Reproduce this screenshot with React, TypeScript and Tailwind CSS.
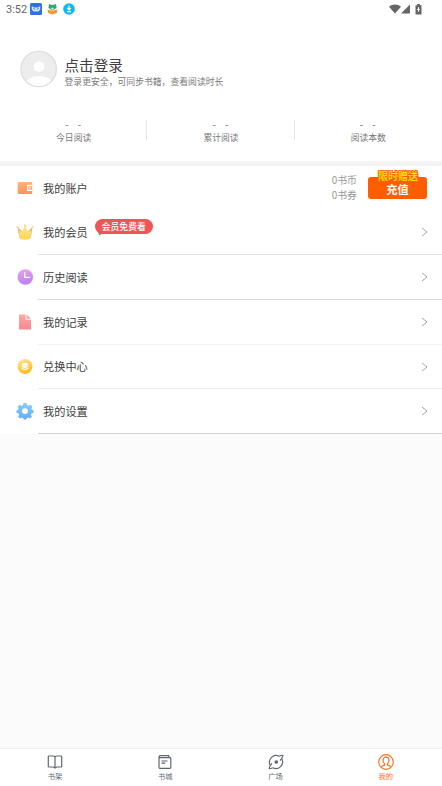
import type { ReactNode } from "react";

interface StatProps {
  label: string;
  divider?: boolean;
}

interface RowProps {
  icon: ReactNode;
  label: string;
  className: string;
  line: string;
  badge?: string;
}

interface TabProps {
  icon: ReactNode;
  label: string;
  active?: boolean;
}

const StatusBar = () => (
  <div className="flex h-[18px] items-center pl-[6px] pr-[20px] text-[#666]">
    <span className="w-[24px] whitespace-nowrap pt-[2px] font-[Roboto] text-[11px] leading-[18px]">
      3:52
    </span>
    <svg className="block" width="12" height="12" viewBox="0 0 12 12">
      <rect width="12" height="12" rx="1.5" fill="#2f6fe8" />
      <path d="M1.800 3l2.200 1.400h4L10.200 3v3.500L8.400 8.500H3.600L1.800 6.500z" fill="#d6e6ff" />
      <path d="M3.400 5.500l1.800.8M8.600 5.500l-1.800.8" stroke="#2f6fe8" strokeWidth="1" />
    </svg>
    <svg className="ml-[5px] block" width="11" height="12" viewBox="0 0 11 12">
      <path d="M2 1l3.500 1L9 1l.6 4-4 2.600L1.400 5z" fill="#36a878" />
      <path d="M.4 6.400l5.100 1.400 5.100-1.400-.8 3.600-4.300 1.400L1.200 10z" fill="#f09a38" />
      <path d="M4 5.500l1.500 1.500L7 5.500 5.500 4.500z" fill="#d9f3dd" />
    </svg>
    <svg className="ml-[5px] block" width="12" height="12" viewBox="0 0 12 12">
      <circle cx="6" cy="6" r="5.800" fill="#0bb8fa" />
      <path d="M6 2.500v4M4.200 5L6 6.800 7.800 5M4 8.700h4" fill="none" stroke="#fff" strokeWidth="1.200" />
    </svg>
    <div className="ml-auto flex items-center">
      <svg className="block" width="12" height="10" viewBox="0 0 12 10">
        <path d="M0 2.800C3.400-.3 8.600-.3 12 2.800L6 9.600z" fill="#666" />
      </svg>
      <svg className="block" width="9" height="10" viewBox="0 0 9 10">
        <path d="M9 .5V9.500H0z" fill="#666" />
      </svg>
      <svg className="ml-[5px] block" width="7" height="11" viewBox="0 0 7 11">
        <path d="M2.200 0h2.600v1.200H6.500v9.300H.5V1.200h1.700z" fill="#666" />
        <path d="M3.500 3.200v4.600M2.200 5.500h2.600" stroke="#fff" strokeWidth="1" />
      </svg>
    </div>
  </div>
);

const Stat = ({ label, divider }: StatProps) => (
  <div className="relative flex-1 text-center text-[#7a7a7a]">
    <div className="h-[10px] whitespace-pre font-['Liberation_Sans'] text-[10px] leading-[9px] tracking-[1.200px] text-[#888]">
      -{"  "}-
    </div>
    <div className="h-[14px] pt-[1px] text-[8.800px] leading-[13px]">{label}</div>
    {divider && <div className="absolute right-0 top-0 h-[20px] w-px bg-[#e4e4e4]" />}
  </div>
);

const Row = ({ icon, label, className, line, badge }: RowProps) => (
  <li className={`flex pl-[16px] ${className}`}>
    <div className="flex w-[22px] items-center pb-[2px]">{icon}</div>
    <div className={`flex flex-1 items-center border-b pl-[5px] pr-[14px] ${line}`}>
      <span className="text-[11.200px]">{label}</span>
      {badge && (
        <div className="relative -top-[6px] ml-[7px] h-[15px] w-[58px] rounded-full bg-[#ef5456] text-center text-[8.800px] font-medium leading-[15px] text-white">
          {badge}
          <svg className="absolute left-[3px] top-[13px]" width="6" height="4" viewBox="0 0 6 4">
            <path d="M0 0h6L1.500 3.500z" fill="#ef5456" />
          </svg>
        </div>
      )}
      <svg className="ml-auto block" width="7" height="10" viewBox="0 0 7 10">
        <path d="M1 1l5 4-5 4" fill="none" stroke="#999" strokeWidth="0.900" />
      </svg>
    </div>
  </li>
);

const Tab = ({ icon, label, active }: TabProps) => (
  <div
    className={`flex flex-1 flex-col items-center pt-[5px] ${
      active ? "text-[#ff701f]" : "text-[#606873]"
    }`}
  >
    {icon}
    <span className="pt-px text-[7.300px] leading-[10px]">{label}</span>
  </div>
);

const WalletIcon = () => (
  <svg width="18" height="18" viewBox="0 0 18 18">
    <defs>
      <linearGradient id="wallet" x1="0" y1="0" x2="0" y2="1">
        <stop stopColor="#ffb66e" />
        <stop offset="1" stopColor="#ff9068" />
      </linearGradient>
    </defs>
    <rect x="1.700" y="3" width="14.500" height="12" rx="1" fill="url(#wallet)" />
    <path d="M16.200 6.500h-4.500v4.800h4.500" fill="none" stroke="#fff" strokeWidth="1.300" />
    <path d="M14 8v1.900" stroke="#fff" strokeWidth="0.900" />
  </svg>
);

const CrownIcon = () => (
  <svg width="18" height="18" viewBox="0 0 18 18">
    <defs>
      <linearGradient id="crown" x1="0" y1="0" x2="0" y2="1">
        <stop stopColor="#fbe59b" />
        <stop offset="1" stopColor="#ffd74e" />
      </linearGradient>
    </defs>
    <path d="M1.500 4L6.500 8.500 4.500 16Q2.500 14 1.500 4zM16.500 4L11.500 8.500l2 7.500Q15.500 14 16.500 4z" fill="#e6be7d" />
    <path d="M9 2.500l2.900 6 3.300-.5-1.200 8Q9 17.500 4 16L2.800 8l3.300.5z" fill="url(#crown)" />
    <circle cx="9" cy="2.800" r="1.500" fill="#f8dfa0" />
    <circle cx="1.500" cy="4" r="1.200" fill="#f1dcb4" />
    <circle cx="16.500" cy="4" r="1.200" fill="#f1dcb4" />
  </svg>
);

const ClockIcon = () => (
  <svg width="18" height="18" viewBox="0 0 18 18">
    <defs>
      <linearGradient id="clock" x1="0.300" y1="0" x2="0.600" y2="1">
        <stop stopColor="#e6a4e8" />
        <stop offset="1" stopColor="#bd7df4" />
      </linearGradient>
    </defs>
    <circle cx="9.300" cy="9" r="7.800" fill="url(#clock)" />
    <path d="M8.700 4.200v5.100h5.500" fill="none" stroke="#fff" strokeWidth="1.300" />
  </svg>
);

const FileIcon = () => (
  <svg width="18" height="18" viewBox="0 0 18 18">
    <defs>
      <linearGradient id="file" x1="0" y1="0" x2="0" y2="1">
        <stop stopColor="#faaba0" />
        <stop offset="1" stopColor="#f98794" />
      </linearGradient>
    </defs>
    <path d="M3 1.500h6.600v5.200H15v9.800H3z" fill="url(#file)" />
    <path d="M10.600 1.500L15 5.700h-4.400z" fill="#f9a49e" />
  </svg>
);

const CoinIcon = () => (
  <svg width="18" height="18" viewBox="0 0 18 18">
    <defs>
      <linearGradient id="coin" x1="0.300" y1="0" x2="0.700" y2="1">
        <stop stopColor="#ffe094" />
        <stop offset="1" stopColor="#fbb913" />
      </linearGradient>
    </defs>
    <circle cx="9" cy="9.500" r="7.500" fill="url(#coin)" />
    <ellipse cx="9" cy="7.200" rx="3.300" ry="1.500" fill="#fff" />
    <path
      d="M5.700 8.500Q9 10.200 12.300 8.500v1.600Q9 11.800 5.700 10.100zM5.700 10.800Q9 12.500 12.300 10.800v1.300Q9 13.800 5.700 12.100z"
      fill="#fff"
    />
  </svg>
);

const GearIcon = () => (
  <svg width="18" height="18" viewBox="0 0 18 18">
    <defs>
      <linearGradient id="gear" x1="0" y1="0" x2="0" y2="1">
        <stop stopColor="#86cdfb" />
        <stop offset="1" stopColor="#64adf7" />
      </linearGradient>
    </defs>
    <path
      d="M7.600 1h2.800l.6 2.100 1.500.6 1.900-1 2 2-1 1.900.6 1.100 1.500.5v2.500l-2 .7-.6 1.400 1 1.900-2 1.900-1.800-1-1.300.6-.7 1.300H7.900l-.7-1.300-1.300-.6-1.800 1-2-1.900 1-1.900-.6-1.400-2-.7V8.200l1.500-.5.600-1.100-1-1.900 2-2 1.900 1 1.500-.6zM9 6.200a2.900 2.900 0 1 0 0 5.800 2.900 2.900 0 0 0 0-5.800z"
      fill="url(#gear)"
      fillRule="evenodd"
    />
  </svg>
);

const BookIcon = () => (
  <svg width="16" height="16" viewBox="0 0 16 16" fill="none" stroke="currentColor" strokeWidth="1.200">
    <path d="M8 3Q7.500 2 6 2H2q-.7 0-.7.700v9.600q0 .7.700.7h4.500L8 14 9.500 13H14q.7 0 .7-.7V2.700Q14.700 2 14 2h-4Q8.500 2 8 3zv11" />
  </svg>
);

const StoreIcon = () => (
  <svg width="16" height="16" viewBox="0 0 16 16" fill="none" stroke="currentColor" strokeWidth="1.200">
    <path d="M2 3.700v9.800q0 .8.800.8h10.200q.8 0 .8-.8V4.500q0-.8-.8-.8zM2 3.700Q2 1.600 3.500 1.600h8.300v2" />
    <path d="M4.500 7h6M4.500 9.200h3.700" />
  </svg>
);

const SquareIcon = () => (
  <svg width="16" height="16" viewBox="0 0 16 16" fill="none" stroke="currentColor" strokeWidth="1.200">
    <path d="M11.200 2.200A6.700 6.700 0 0 0 2.200 11.200M4.800 13.800A6.700 6.700 0 0 0 13.800 4.800" />
    <path d="M11.200 2.200Q14.300.9 14.800 1.300T13.500 4.800L12 6.500M4.800 13.800Q1.700 15.100 1.200 14.700T2.500 11.200L4 9.500" />
    <circle cx="8.300" cy="8" r="1.200" fill="currentColor" />
  </svg>
);

const MineIcon = () => (
  <svg width="16" height="16" viewBox="0 0 16 16" fill="none" stroke="currentColor" strokeWidth="1.200">
    <circle cx="8" cy="8" r="7.300" />
    <path d="M3.500 12.700Q4 11.400 6.500 11.100V9.700Q5 8.200 5 6.200a3 3 0 0 1 6 0Q11 8.200 9.500 9.700v1.400q2.500.3 3 1.600" />
  </svg>
);

const App = () => {
  return (
    <div className="flex h-[786px] w-[442px] flex-col overflow-hidden bg-[#fbfbfb] font-['Noto_Sans_CJK_SC',sans-serif] text-[#404040]">
      <header className="h-[166px] border-b-[5px] border-[#f3f3f3] bg-white">
        <StatusBar />
        <div className="flex items-start pl-[20px] pt-[32px]">
          <svg className="block" width="38" height="38" viewBox="0 0 38 38">
            <defs>
              <clipPath id="avatar">
                <circle cx="19" cy="19" r="17" />
              </clipPath>
            </defs>
            <circle cx="18.700" cy="19" r="17.700" fill="#ededed" stroke="#dedede" strokeWidth="1.300" />
            <circle cx="19" cy="16.500" r="5.300" fill="#fff" />
            <ellipse cx="19" cy="34" rx="13" ry="8" fill="#fff" clipPath="url(#avatar)" />
          </svg>
          <div className="pl-[6.500px] pt-[5px]">
            <div className="text-[14.600px] leading-[20px]">点击登录</div>
            <div className="text-[8.830px] leading-[13px] text-[#7a7a7a]">
              登录更安全，可同步书籍，查看阅读时长
            </div>
          </div>
        </div>
        <div className="mt-[32px] flex">
          <Stat label="今日阅读" divider />
          <Stat label="累计阅读" divider />
          <Stat label="阅读本数" />
        </div>
      </header>

      <ul className="bg-white">
        <li className="flex h-[44px] items-center pl-[16px] pr-[15px]">
          <div className="w-[27px]">
            <WalletIcon />
          </div>
          <span className="text-[11.200px]">我的账户</span>
          <div className="ml-auto text-[9.900px] leading-[15px] text-[#999]">
            <div>0书币</div>
            <div>0书券</div>
          </div>
          <div className="relative ml-[11px] h-[22px] w-[59px] rounded-[3px] bg-[#ff5d00] text-center text-[11.200px] font-bold leading-[25px] text-white">
            充值
            <svg className="absolute left-0 -top-[9px] overflow-visible" width="59" height="16">
              <text
                x="30"
                y="12"
                textAnchor="middle"
                fontSize="10"
                fontWeight="500"
                fill="#fff000"
                stroke="#ff5d00"
                strokeWidth="2"
                paintOrder="stroke"
              >
                限时赠送
              </text>
            </svg>
          </div>
        </li>
        <Row icon={<CrownIcon />} label="我的会员" badge="会员免费看" className="h-[45px]" line="border-[#e3e3e3]" />
        <Row icon={<ClockIcon />} label="历史阅读" className="h-[45px]" line="border-[#d9d9d9]" />
        <Row icon={<FileIcon />} label="我的记录" className="h-[45px]" line="border-[#f2f2f2]" />
        <Row icon={<CoinIcon />} label="兑换中心" className="h-[44px]" line="border-[#ececec]" />
        <Row icon={<GearIcon />} label="我的设置" className="h-[45px]" line="border-[#d3d3d3]" />
      </ul>

      <nav className="mt-auto flex h-[38px] border-t border-[#f0f0f0] bg-white pr-px">
        <Tab icon={<BookIcon />} label="书架" />
        <Tab icon={<StoreIcon />} label="书城" />
        <Tab icon={<SquareIcon />} label="广场" />
        <Tab icon={<MineIcon />} label="我的" active />
      </nav>
    </div>
  );
};

export default App;
